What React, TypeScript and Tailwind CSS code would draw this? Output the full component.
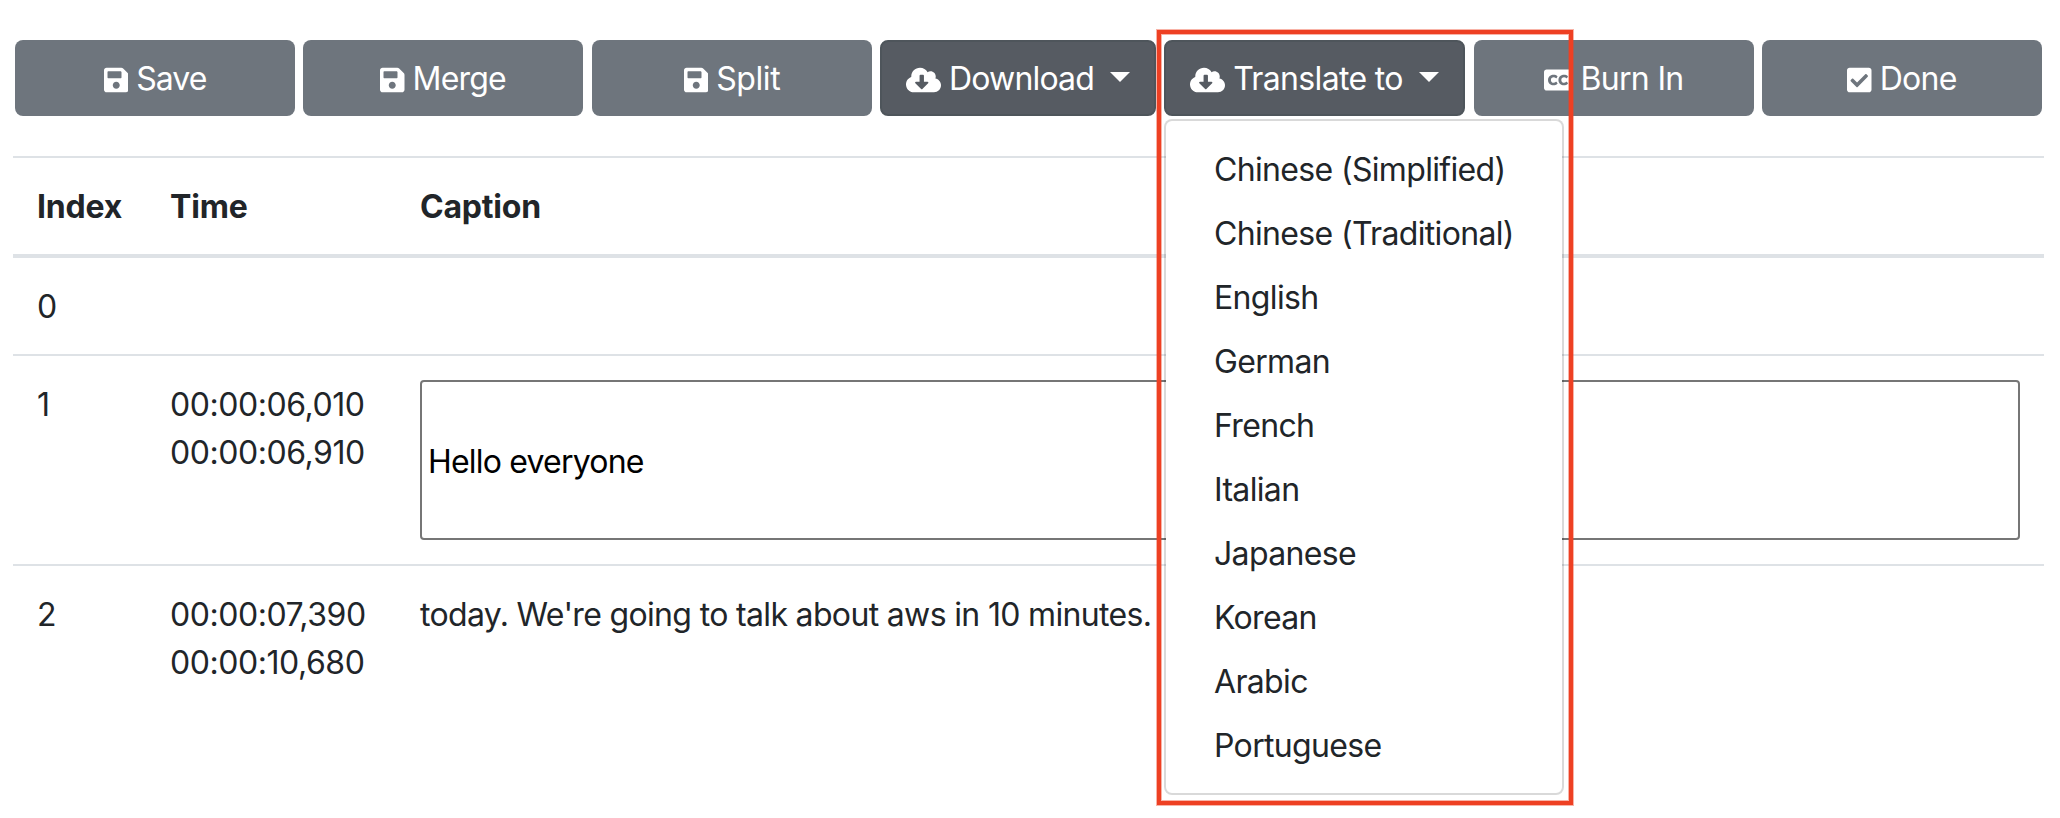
import React from "react";
import type { ReactNode } from "react";
import {
  FaSave,
  FaCloudDownloadAlt,
  FaClosedCaptioning,
  FaCheckSquare,
} from "react-icons/fa";

const languages = [
  "Chinese (Simplified)",
  "Chinese (Traditional)",
  "English",
  "German",
  "French",
  "Italian",
  "Japanese",
  "Korean",
  "Arabic",
  "Portuguese",
];

function ToolButton({
  icon,
  label,
  className = "w-[280px] bg-[#6e757d]",
  caret = false,
}: {
  icon: ReactNode;
  label: string;
  className?: string;
  caret?: boolean;
}) {
  return (
    <button
      className={`flex h-[76px] shrink-0 items-center justify-center gap-2 rounded-lg text-white ${className}`}
    >
      <span className="pt-[3px]">{icon}</span>
      <span className="pt-0.5">{label}</span>
      {caret && (
        <span className="mb-[3px] ml-2 border-x-[10px] border-t-[10px] border-x-transparent border-t-white" />
      )}
    </button>
  );
}

function Row({
  index,
  times,
  children,
}: {
  index: number;
  times: string[];
  children?: ReactNode;
}) {
  return (
    <tr className="align-top">
      <td className="px-6 pt-[25px] pb-[23px]">{index}</td>
      <td className="px-6 pt-[25px] pb-[23px] tracking-[-0.45px]">
        {times.map((t) => (
          <div key={t}>{t}</div>
        ))}
      </td>
      <td className="px-6 pt-[25px] pb-[23px]">{children}</td>
    </tr>
  );
}

export default function App() {
  const save = <FaSave className="h-7 w-[24.5px]" />;
  const cloud = <FaCloudDownloadAlt className="h-7 w-[35px]" />;
  return (
    <div className="relative h-[818px] w-[2060px] overflow-hidden bg-white pt-10 font-['Inter','Liberation_Sans',sans-serif] text-[32px] leading-[48px] tracking-[-0.66px] text-[#212529]">
      <div className="flex gap-2 pl-[15px]">
        <ToolButton
          icon={save}
          label="Save"
          className="w-[280px] bg-[#6e757d] tracking-[-0.95px]"
        />
        <ToolButton
          icon={save}
          label="Merge"
          className="w-[280px] bg-[#6e757d] tracking-[-0.8px]"
        />
        <ToolButton
          icon={save}
          label="Split"
          className="ml-px w-[280px] bg-[#6e757d] tracking-[-0.4px]"
        />
        <ToolButton
          icon={cloud}
          label="Download"
          className="w-[276px] border-2 border-[#4e555b] bg-[#565b62] tracking-[-0.85px]"
          caret
        />
        <div className="relative">
          <ToolButton
            icon={cloud}
            label="Translate to"
            className="w-[301px] border-2 border-[#4e555b] bg-[#565b62]"
            caret
          />
          <ul className="absolute top-[79px] left-0 z-10 w-[400px] rounded-lg border-2 border-black/15 bg-white bg-clip-padding py-4">
            {languages.map((l) => (
              <li key={l} className="h-16 px-12 pt-[9px] pb-[7px] whitespace-nowrap">
                {l}
              </li>
            ))}
          </ul>
        </div>
        <ToolButton
          icon={<FaClosedCaptioning className="size-7" />}
          label="Burn In"
          className="ml-px w-[280px] bg-[#6e757d]"
        />
        <ToolButton icon={<FaCheckSquare className="h-7 w-[24.5px]" />} label="Done" />
      </div>

      <table className="mt-10 ml-[13px] w-[2031px] table-fixed border-separate border-spacing-0 [&_td]:border-t-2 [&_td]:border-[#dee2e6] [&_th]:border-t-2 [&_th]:border-b-4 [&_th]:border-[#dee2e6]">
        <colgroup>
          <col className="w-[133px]" />
          <col className="w-[250px]" />
          <col />
        </colgroup>
        <thead>
          <tr className="text-left font-bold tracking-[-0.2px]">
            <th className="px-6 pt-[25px] pb-[23px]">Index</th>
            <th className="px-6 pt-[25px] pb-[23px]">Time</th>
            <th className="px-6 pt-[25px] pb-[23px]">Caption</th>
          </tr>
        </thead>
        <tbody className="[&_tr:first-child_td]:border-t-0">
          <Row index={0} times={[]} />
          <Row index={1} times={["00:00:06,010", "00:00:06,910"]}>
            <input
              className="-mt-px mb-px block h-40 w-full rounded-[4px] border-2 border-[#767676] px-1.5 pt-0.5 tracking-[-0.8px] text-black"
              defaultValue="Hello everyone"
            />
          </Row>
          <Row index={2} times={["00:00:07,390", "00:00:10,680"]}>
            today. We're going to talk about aws in 10 minutes.
          </Row>
        </tbody>
      </table>

      <div className="pointer-events-none absolute top-[30px] left-[1157px] z-20 h-[775px] w-[416px] border-4 border-[#ee4023] shadow-[0_0_0_1px_#ee402366,inset_0_0_0_1px_#ee402366]" />
    </div>
  );
}
